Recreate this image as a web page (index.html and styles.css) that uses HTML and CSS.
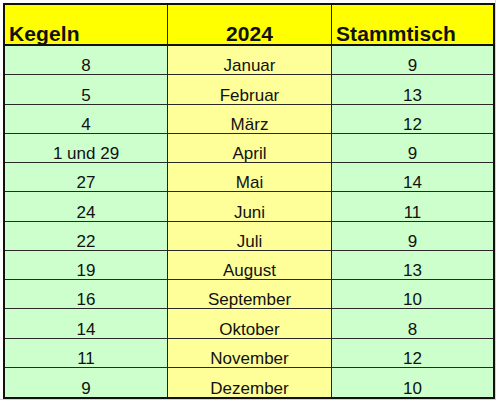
FILE: index.html
```html
<!DOCTYPE html>
<html lang="de">
<head>
<meta charset="utf-8">
<title>Kegeln 2024 Stammtisch</title>
<link rel="stylesheet" href="styles.css">
</head>
<body>
<div class="sheet">
  <div class="table">
    <div class="cell head left">Kegeln</div>
    <div class="cell head center">2024</div>
    <div class="cell head left last">Stammtisch</div>

    <div class="cell green">8</div><div class="cell yellow">Januar</div><div class="cell green last">9</div>
    <div class="cell green">5</div><div class="cell yellow">Februar</div><div class="cell green last">13</div>
    <div class="cell green">4</div><div class="cell yellow">März</div><div class="cell green last">12</div>
    <div class="cell green">1 und 29</div><div class="cell yellow">April</div><div class="cell green last">9</div>
    <div class="cell green">27</div><div class="cell yellow">Mai</div><div class="cell green last">14</div>
    <div class="cell green">24</div><div class="cell yellow">Juni</div><div class="cell green last">11</div>
    <div class="cell green">22</div><div class="cell yellow">Juli</div><div class="cell green last">9</div>
    <div class="cell green">19</div><div class="cell yellow">August</div><div class="cell green last">13</div>
    <div class="cell green">16</div><div class="cell yellow">September</div><div class="cell green last">10</div>
    <div class="cell green">14</div><div class="cell yellow">Oktober</div><div class="cell green last">8</div>
    <div class="cell green">11</div><div class="cell yellow">November</div><div class="cell green last">12</div>
    <div class="cell green bottom">9</div><div class="cell yellow bottom">Dezember</div><div class="cell green last bottom">10</div>
  </div>
</div>
</body>
</html>
```
FILE: styles.css
```css
html, body {
  margin: 0;
  padding: 0;
  background: #ffffff;
}
body {
  font-family: "Liberation Sans", Arial, sans-serif;
  color: #000;
}
.sheet {
  width: 496px;
  height: 400px;
  border-right: 1px solid #d4d4d4;
  border-bottom: 1px solid #d4d4d4;
  padding: 3px 0 0 3px;
  box-sizing: border-box;
}
.table {
  width: 492px;
  height: 396px;
  box-sizing: border-box;
  border: 2px solid #111;
  display: grid;
  grid-template-columns: 163px 164px 161px;
  grid-template-rows: 41px repeat(12, 1fr);
}
.cell {
  display: flex;
  align-items: flex-end;
  justify-content: center;
  box-sizing: border-box;
  border-right: 1px solid #222;
  border-bottom: 1px solid #2a2a2a;
  font-size: 17px;
  line-height: 17px;
  padding-bottom: 0;
  color: #111;
  white-space: nowrap;
}
.cell.last {
  border-right: none;
}
.cell.bottom {
  border-bottom: none;
}
.head {
  background: #ffff00;
  font-weight: bold;
  font-size: 21px;
  line-height: 21px;
  border-bottom: 2px solid #111;
  padding-bottom: 0;
  letter-spacing: 0.1px;
}
.head.left {
  justify-content: flex-start;
  padding-left: 4px;
}
.green {
  background: #ccffcc;
}
.yellow {
  background: #ffff99;
}
```
